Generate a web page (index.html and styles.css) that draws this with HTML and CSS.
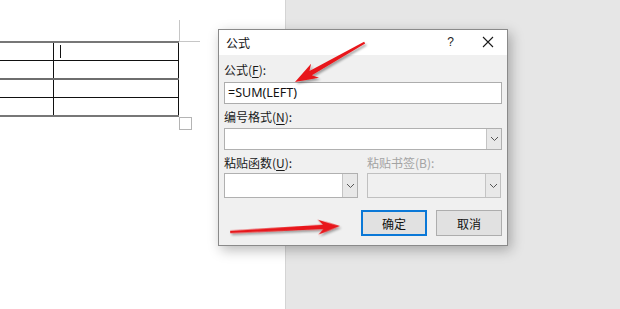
FILE: index.html
```html
<!DOCTYPE html>
<html lang="zh-CN">
<head>
    <meta charset="UTF-8">
    <link rel="stylesheet" href="styles.css">
    <title>公式</title>
</head>
<body>
    <div class="doc">
        <div class="page">
            <div class="table-wrap">
                <div class="corner-v"></div>
                <div class="corner-h"></div>
                <table class="word-table">
                    <tr class="row-first"><td class="col-a"></td><td class="col-b"><span class="caret"></span></td></tr>
                    <tr class="row-mid"><td class="col-a"></td><td class="col-b"></td></tr>
                    <tr class="row-mid"><td class="col-a"></td><td class="col-b"></td></tr>
                    <tr class="row-last"><td class="col-a"></td><td class="col-b"></td></tr>
                </table>
                <div class="resize-handle"></div>
            </div>
        </div>
        <div class="desk"></div>
    </div>

    <div class="dialog">
        <div class="title-bar">
            <span class="title">公式</span>
            <span class="help">?</span>
            <svg class="close" width="12" height="12" viewBox="0 0 12 12">
                <path d="M1 1 L11 11 M11 1 L1 11" stroke="#1a1a1a" stroke-width="1.1" fill="none"/>
            </svg>
        </div>
        <div class="dialog-body">
            <label class="label label-first">公式(<u>F</u>):</label>
            <div class="text-input">=SUM(LEFT)</div>

            <label class="label">编号格式(<u>N</u>):</label>
            <div class="combo combo-wide">
                <div class="combo-field"></div>
                <div class="combo-btn">
                    <svg width="9" height="6" viewBox="0 0 9 6"><path d="M1 1 L4.5 4.5 L8 1" stroke="#555" fill="none"/></svg>
                </div>
            </div>

            <div class="pair">
                <div class="pair-col">
                    <label class="label">粘贴函数(<u>U</u>):</label>
                    <div class="combo combo-tall">
                        <div class="combo-field"></div>
                        <div class="combo-btn">
                            <svg width="9" height="6" viewBox="0 0 9 6"><path d="M1 1 L4.5 4.5 L8 1" stroke="#555" fill="none"/></svg>
                        </div>
                    </div>
                </div>
                <div class="pair-col">
                    <label class="label disabled">粘贴书签(B):</label>
                    <div class="combo combo-tall combo-disabled">
                        <div class="combo-field"></div>
                        <div class="combo-btn">
                            <svg width="9" height="6" viewBox="0 0 9 6"><path d="M1 1 L4.5 4.5 L8 1" stroke="#555" fill="none"/></svg>
                        </div>
                    </div>
                </div>
            </div>

            <div class="buttons">
                <button class="btn btn-default">确定</button>
                <button class="btn">取消</button>
            </div>
        </div>
    </div>

    <svg class="arrows" width="620" height="309" viewBox="0 0 620 309">
        <defs>
            <filter id="arrow-shadow" x="-20%" y="-50%" width="140%" height="200%">
                <feDropShadow dx="1.5" dy="2" stdDeviation="1.3" flood-color="#000" flood-opacity="0.35"/>
            </filter>
        </defs>
        <g filter="url(#arrow-shadow)" fill="#e8161a">
            <polygon transform="translate(295 82) rotate(-29.5)" points="0,0 23,-8 18,-2.4 80,-1.1 80,1.1 18,2.4 23,8"/>
            <polygon transform="translate(340 226) rotate(176.9)" points="0,0 22,-7.5 17,-2.2 110,-1.2 110,1.2 17,2.2 22,7.5"/>
        </g>
    </svg>
</body>
</html>
```

FILE: styles.css
```css
body {
    margin: 0;
    padding: 0;
    width: 620px;
    height: 309px;
    overflow: hidden;
    position: relative;
    font-family: "Noto Sans CJK SC", "Noto Sans", sans-serif;
    font-size: 12px;
    color: #1a1a1a;
}

.doc {
    display: flex;
    height: 309px;
}

.page {
    width: 286px;
    background: #ffffff;
    border-right: 1px solid #d4d4d4;
    padding-top: 41px;
    box-sizing: border-box;
}

.desk {
    flex: 1;
    background: #e6e6e6;
}

.table-wrap {
    position: relative;
    width: 180px;
}

.word-table {
    border-collapse: collapse;
    border-spacing: 0;
}

.word-table td {
    padding: 0;
    height: 17px;
    border-bottom: 1px solid #111;
    position: relative;
}

.col-a {
    width: 53px;
    border-right: 1px solid #111;
}

.col-b {
    width: 124px;
    border-right: 1px solid #111;
}

.row-first td {
    border-top: 2px solid #777;
}

.row-mid:nth-child(2) td {
    border-bottom: 2px solid #6e6e6e;
}

.row-last td {
    border-bottom: 2px solid #777;
}

.caret {
    position: absolute;
    left: 6px;
    top: 2px;
    width: 1px;
    height: 13px;
    background: #111;
}

.corner-v {
    position: absolute;
    left: 179px;
    top: -21px;
    width: 1px;
    height: 21px;
    background: #c6c6c6;
}

.corner-h {
    position: absolute;
    left: 179px;
    top: 0;
    width: 21px;
    height: 1px;
    background: #c6c6c6;
}

.resize-handle {
    position: absolute;
    left: 179px;
    top: 100%;
    width: 11px;
    height: 11px;
    border: 1px solid #b4b4b4;
    background: #fff;
}

/* dialog */
.dialog {
    position: absolute;
    left: 218px;
    top: 29px;
    width: 290px;
    height: 217px;
    box-sizing: border-box;
    border: 1px solid #8a8a8a;
    background: #f0f0f0;
    box-shadow: 3px 4px 12px rgba(0, 0, 0, 0.28);
    display: flex;
    flex-direction: column;
}

.title-bar {
    height: 25px;
    background: #ffffff;
    display: flex;
    align-items: center;
    padding: 0 0 0 7px;
}

.title {
    flex: 1;
    font-size: 12px;
    color: #111;
}

.help {
    font-family: "Liberation Sans", sans-serif;
    font-size: 12px;
    color: #222;
    margin-right: 28px;
    margin-top: -2px;
}

.close {
    margin-right: 13px;
    margin-top: -1px;
}

.dialog-body {
    flex: 1;
    padding: 0 5px 0 5px;
    display: flex;
    flex-direction: column;
}

.label {
    display: block;
    height: 16px;
    line-height: 16px;
    margin-top: 5px;
    color: #1a1a1a;
}

.label u {
    text-decoration: underline;
    text-underline-offset: 2px;
}

.label-first {
    margin-top: 7px;
}

.label.disabled {
    color: #a3a3a3;
}

.text-input {
    margin-top: 4px;
    height: 22px;
    box-sizing: border-box;
    border: 1px solid #adadad;
    background: #ffffff;
    padding: 0 3px;
    line-height: 20px;
    font-family: "Noto Sans", sans-serif;
    font-size: 12.5px;
    color: #111;
}

.combo {
    display: flex;
    box-sizing: border-box;
    border: 1px solid #b0b0b0;
    background: #ffffff;
    margin-top: 3px;
}

.combo-wide {
    height: 22px;
}

.combo-tall {
    height: 25px;
    margin-top: 2px;
}

.combo-field {
    flex: 1;
}

.combo-btn {
    width: 14px;
    border-left: 1px solid #c4c4c4;
    background: #e8e8e8;
    display: flex;
    align-items: center;
    justify-content: center;
}

.combo-disabled {
    background: #f0f0f0;
    border-color: #c0c0c0;
}

.pair {
    display: grid;
    grid-template-columns: 134px 134px;
    column-gap: 9px;
}

.buttons {
    display: flex;
    justify-content: flex-end;
    gap: 9px;
    margin-top: 12px;
}

.btn {
    width: 66px;
    height: 26px;
    box-sizing: border-box;
    border: 1px solid #adadad;
    background: #e1e1e1;
    font-family: "Noto Sans CJK SC", sans-serif;
    font-size: 12px;
    color: #111;
    padding: 0;
}

.btn-default {
    border: 2px solid #0a78d7;
}

.arrows {
    position: absolute;
    left: 0;
    top: 0;
    pointer-events: none;
}
```
